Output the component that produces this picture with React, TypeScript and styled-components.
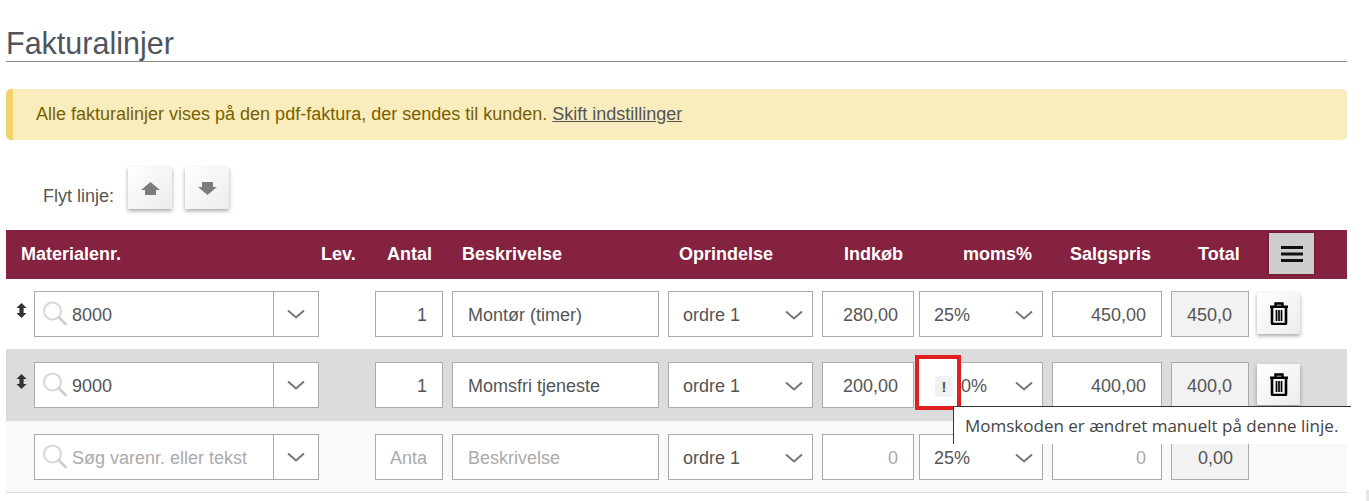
import React from 'react';
import styled, {createGlobalStyle, css} from "styled-components";

const GlobalStyle = createGlobalStyle`
    html, body {
        margin: 0;
        background: #fff;
        font-family: "Liberation Sans", Arial, sans-serif;
        color: #555;
    }
`

type LineData = {
    number: string
    amount: string
    description: string
    purchase: string
    vat: string
    sale: string
    total: string
    placeholder?: boolean
    changedVat?: boolean
}

const lines: LineData[] = [
    {number: '8000', amount: '1', description: 'Montør (timer)', purchase: '280,00', vat: '25%', sale: '450,00', total: '450,0'},
    {number: '9000', amount: '1', description: 'Momsfri tjeneste', purchase: '200,00', vat: '0%', sale: '400,00', total: '400,0', changedVat: true},
    {number: 'Søg varenr. eller tekst', amount: 'Anta', description: 'Beskrivelse', purchase: '0', vat: '25%', sale: '0', total: '0,00', placeholder: true},
]

const headers = [
    {label: '', inset: 0},
    {label: 'Materialenr.', inset: -13},
    {label: 'Lev.', inset: 2},
    {label: 'Antal', inset: 12},
    {label: 'Beskrivelse', inset: 10},
    {label: 'Oprindelse', inset: 11},
    {label: 'Indkøb', inset: 22},
    {label: 'moms%', inset: 44},
    {label: 'Salgspris', inset: 18},
    {label: 'Total', inset: 27},
]

const Chevron = () => (
    <ChevronSvg width="18" height="10" viewBox="0 0 18 10">
        <path d="M1 1.5 L9 8.5 L17 1.5" fill="none" stroke="#777" strokeWidth="2"/>
    </ChevronSvg>
)

const SearchIcon = () => (
    <svg width="26" height="26" viewBox="0 0 26 26">
        <circle cx="10.5" cy="10" r="8.5" fill="none" stroke="#d8d8d8" strokeWidth="2.2"/>
        <path d="M17 16.5 L23.5 23" stroke="#d0d0d0" strokeWidth="3" strokeLinecap="round"/>
    </svg>
)

const MoveHandleIcon = () => (
    <svg width="11" height="15" viewBox="0 0 11 15">
        <path d="M5.5 0 L10.6 5 H7.6 V10 H10.6 L5.5 15 L0.4 10 H3.4 V5 H0.4 Z" fill="#333"/>
    </svg>
)

const ArrowIcon = ({down}: { down?: boolean }) => (
    <svg width="19" height="13" viewBox="0 0 19 13" style={down ? {transform: 'rotate(180deg)'} : undefined}>
        <path d="M9.5 0 L19 8 H15 V13 H4 V8 H0 Z" fill="#7c7c7c"/>
    </svg>
)

const TrashIcon = () => (
    <svg width="18" height="23" viewBox="0 0 18 23">
        <path d="M5.5 4 V1.5 H12.5 V4 M0 4.8 H18" fill="none" stroke="#000" strokeWidth="2.4"/>
        <path d="M2 5 V21 Q2 22 3 22 H15 Q16 22 16 21 V5" fill="none" stroke="#000" strokeWidth="2.6"/>
        <path d="M6.5 8 V19 M9 8 V19 M11.5 8 V19" stroke="#000" strokeWidth="1.7"/>
    </svg>
)

const MenuIcon = () => (
    <svg width="22" height="18" viewBox="0 0 22 18">
        <path d="M0 2.5 H22 M0 9 H22 M0 15.5 H22" stroke="#111" strokeWidth="3"/>
    </svg>
)

const InvoiceLine = ({line, index}: { line: LineData, index: number }) => (
    <Row $shade={index}>
        <HandleCell>{!line.placeholder && <MoveHandleIcon/>}</HandleCell>
        <Combo>
            <ComboInput $muted={line.placeholder}>
                <SearchIcon/>
                <span>{line.number}</span>
            </ComboInput>
            <ComboCaret><Chevron/></ComboCaret>
        </Combo>
        <div/>
        <Field $width={68} $right $muted={line.placeholder}>{line.amount}</Field>
        <Field $width={207} $muted={line.placeholder}>{line.description}</Field>
        <SelectField $width={145}>ordre 1<Chevron/></SelectField>
        <Field $width={92} $right $muted={line.placeholder}>{line.purchase}</Field>
        <VatCell>
            <SelectField $width={124}>
                <VatValue>
                    {line.changedVat && <WarningBadge>!</WarningBadge>}
                    {line.vat}
                </VatValue>
                <Chevron/>
            </SelectField>
            {line.changedVat && (
                <>
                    <RedMarker/>
                    <Tooltip>Momskoden er ændret manuelt på denne linje.</Tooltip>
                </>
            )}
        </VatCell>
        <Field $width={110} $right $muted={line.placeholder}>{line.sale}</Field>
        <TotalField $width={78} $right={line.placeholder}>{line.total}</TotalField>
        {!line.placeholder && <TrashButton><TrashIcon/></TrashButton>}
    </Row>
)

export default function App() {
    return (
        <Page>
            <GlobalStyle/>
            <Title>Fakturalinjer</Title>
            <Alert>
                Alle fakturalinjer vises på den pdf-faktura, der sendes til kunden. <AlertLink>Skift indstillinger</AlertLink>
            </Alert>
            <MoveBar>
                <MoveLabel>Flyt linje:</MoveLabel>
                <MoveButton><ArrowIcon/></MoveButton>
                <MoveButton><ArrowIcon down/></MoveButton>
            </MoveBar>
            <HeaderRow>
                {headers.map((h, i) => <HeaderCell key={i} $inset={h.inset}>{h.label}</HeaderCell>)}
                <MenuButton><MenuIcon/></MenuButton>
            </HeaderRow>
            {lines.map((line, i) => <InvoiceLine key={i} line={line} index={i}/>)}
            <ScrollCorner/>
        </Page>
    );
}

const columns = css`
    display: grid;
    grid-template-columns: 28px 285px 56px 77px 216px 154px 97px 133px 119px 86px 90px;
`

const Page = styled.div`
    position: relative;
    width: 1341px;
    height: 501px;
    margin-left: 6px;
`

const Title = styled.h2`
    margin: 0;
    height: 61px;
    box-sizing: content-box;
    border-bottom: 1px solid #8a8a8a;
    padding: 0;
    font-size: 30.5px;
    font-weight: 400;
    line-height: 87px;
    color: #50545c;
    overflow: hidden;
`

const Alert = styled.div`
    box-sizing: border-box;
    height: 51px;
    margin-top: 27px;
    padding-left: 23px;
    border-left: 7px solid #f0d36e;
    border-radius: 5px;
    background: #f9edbe;
    color: #786000;
    font-size: 18px;
    line-height: 50px;
`

const AlertLink = styled.a`
    color: #555;
    text-decoration: underline;
`

const MoveBar = styled.div`
    display: flex;
    align-items: flex-start;
    height: 63px;
    margin-top: 27px;
    padding-left: 37px;
`

const MoveLabel = styled.span`
    width: 85px;
    padding-top: 20px;
    font-size: 18px;
    line-height: 19px;
`

const shadowButton = css`
    display: flex;
    align-items: center;
    justify-content: center;
    background: linear-gradient(135deg, #fff 0%, #ececec 100%);
    box-shadow: 0 2px 4px rgba(0, 0, 0, 0.35);
`

const MoveButton = styled.div`
    ${shadowButton};
    width: 44px;
    height: 42px;
    margin-right: 13px;
`

const HeaderRow = styled.div`
    ${columns};
    height: 49px;
    background: #842240;
    align-items: center;
`

const HeaderCell = styled.div<{ $inset: number }>`
    padding-left: ${props => Math.max(props.$inset, 0)}px;
    margin-left: ${props => Math.min(props.$inset, 0)}px;
    color: #fff;
    font-size: 18px;
    font-weight: 700;
    white-space: nowrap;
`

const MenuButton = styled.div`
    display: flex;
    align-items: center;
    justify-content: center;
    width: 45px;
    height: 41px;
    margin-left: 12px;
    margin-top: -2px;
    background: #cdcdcd;
    box-shadow: 0 0 3px rgba(0, 0, 0, 0.3);
`

const rowShades = ['#fff', '#dcdcdc', '#f9f9f9']

const Row = styled.div<{ $shade: number }>`
    ${columns};
    box-sizing: border-box;
    height: ${props => props.$shade === 0 ? 70 : 72}px;
    padding-top: ${props => props.$shade === 0 ? 12 : 13}px;
    background: ${props => rowShades[props.$shade]};
    border-bottom: ${props => props.$shade === 2 ? '1px solid #dcdcdc' : 'none'};
`

const HandleCell = styled.div`
    padding: 12px 0 0 10px;
`

const fieldBox = css`
    box-sizing: border-box;
    height: 46px;
    border: 1px solid #aaa;
    background: #fff;
    font-size: 18px;
`

const Combo = styled.div`
    ${fieldBox};
    display: flex;
    width: 285px;
`

const ComboInput = styled.div<{ $muted?: boolean }>`
    flex: 1;
    display: flex;
    align-items: center;
    gap: 4px;
    padding-left: 7px;
    border-right: 1px solid #aaa;
    color: ${props => props.$muted ? '#aaa' : '#555'};

    span {
        padding-top: 2px;
    }
`

const ComboCaret = styled.div`
    display: flex;
    align-items: center;
    justify-content: center;
    width: 44px;
`

const ChevronSvg = styled.svg`
    flex: none;
`

const Field = styled.div<{ $width: number, $right?: boolean, $muted?: boolean }>`
    ${fieldBox};
    display: flex;
    align-items: center;
    justify-content: ${props => props.$right ? 'flex-end' : 'flex-start'};
    width: ${props => props.$width}px;
    padding: 2px 15px 0;
    color: ${props => props.$muted ? '#aaa' : '#555'};
    white-space: nowrap;
`

const SelectField = styled(Field)`
    justify-content: space-between;
    padding: 2px 9px 0 14px;
`

const TotalField = styled(Field)`
    background: #f2f2f2;
`

const VatCell = styled.div`
    position: relative;
`

const VatValue = styled.span`
    display: flex;
    align-items: center;
`

const WarningBadge = styled.span`
    position: relative;
    z-index: 2;
    width: 18px;
    height: 21px;
    margin: 0 8px 0 1px;
    border-radius: 4px;
    background: #f0f1f3;
    color: #555;
    font-size: 15px;
    font-weight: 700;
    line-height: 21px;
    text-align: center;
`

const RedMarker = styled.div`
    position: absolute;
    z-index: 1;
    left: -4px;
    top: -7px;
    box-sizing: border-box;
    width: 46px;
    height: 55px;
    border: 4px solid #e02020;
    background: #fff;
`

const Tooltip = styled.div`
    position: absolute;
    z-index: 3;
    left: 34px;
    top: 44px;
    box-sizing: border-box;
    width: 398px;
    height: 38px;
    padding-left: 11px;
    border-top: 1px solid #333;
    border-left: 1px solid #333;
    background: #fff;
    color: #444;
    font-family: "Open Sans", sans-serif;
    font-size: 17px;
    line-height: 38px;
    white-space: nowrap;
`

const TrashButton = styled.div`
    ${shadowButton};
    width: 43px;
    height: 41px;
    margin-top: 2px;
`

const ScrollCorner = styled.div`
    position: absolute;
    left: 1360px;
    top: 490px;
    width: 3px;
    height: 11px;
    background: #e6e6e6;
`
